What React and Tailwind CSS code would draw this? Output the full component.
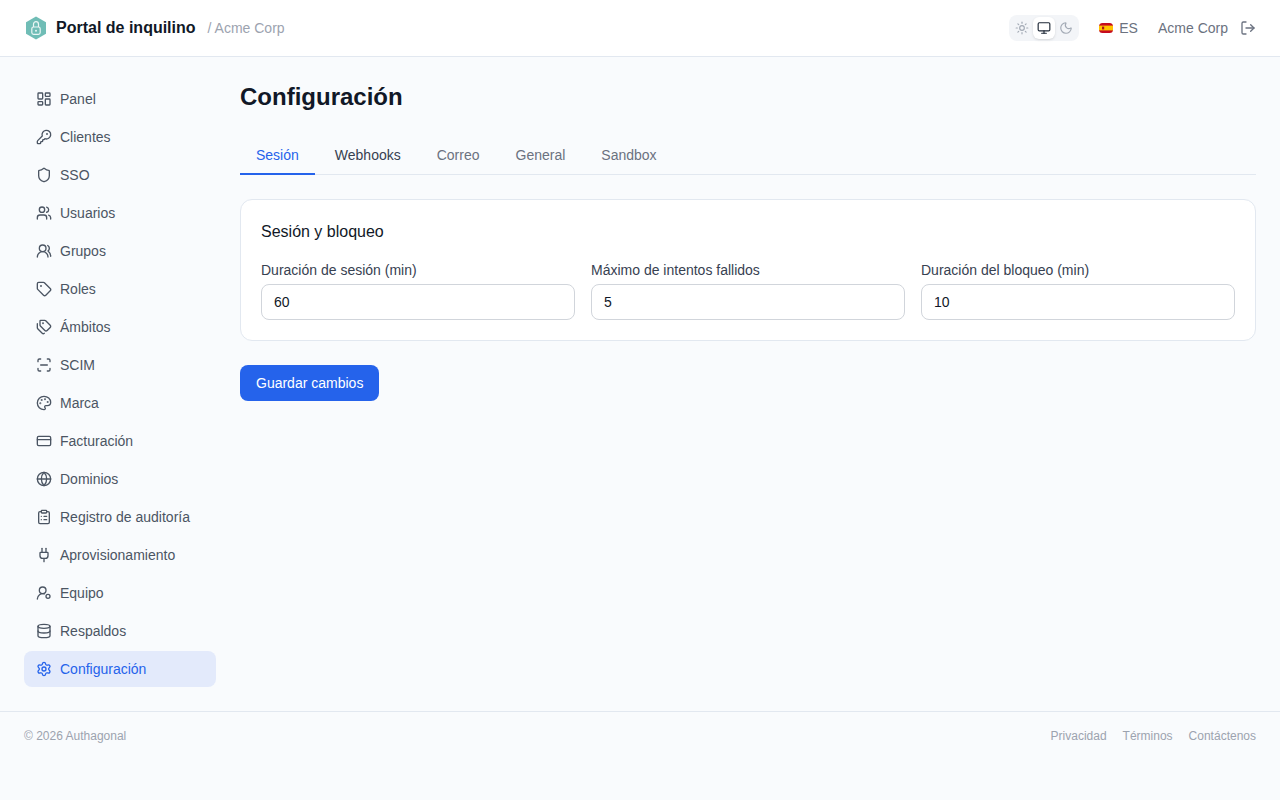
import React from "react";
import {
  LayoutDashboard, KeyRound, Shield, Users, UsersRound, Tag, Tags, ScanLine, Palette, CreditCard, Globe,
  ClipboardList, Plug, Database, Settings, Sun, Monitor, Moon, LogOut,
} from "lucide-react";

const UserDot = ({ size, strokeWidth, className }) => (
  <svg width={size} height={size} viewBox="0 0 24 24" fill="none" stroke="currentColor" strokeWidth={strokeWidth} strokeLinecap="round" className={className}>
    <circle cx="10" cy="8" r="5" />
    <path d="M2 21a8 8 0 0 1 10.4-7.6" />
    <circle cx="18" cy="17" r="3" />
  </svg>
);

const navItems = [
  { label: "Panel", icon: LayoutDashboard },
  { label: "Clientes", icon: KeyRound },
  { label: "SSO", icon: Shield },
  { label: "Usuarios", icon: Users },
  { label: "Grupos", icon: UsersRound },
  { label: "Roles", icon: Tag },
  { label: "Ámbitos", icon: Tags },
  { label: "SCIM", icon: ScanLine },
  { label: "Marca", icon: Palette },
  { label: "Facturación", icon: CreditCard },
  { label: "Dominios", icon: Globe },
  { label: "Registro de auditoría", icon: ClipboardList },
  { label: "Aprovisionamiento", icon: Plug },
  { label: "Equipo", icon: UserDot },
  { label: "Respaldos", icon: Database },
  { label: "Configuración", icon: Settings, active: true },
];

const tabs = ["Sesión", "Webhooks", "Correo", "General", "Sandbox"];

const fields = [
  { label: "Duración de sesión (min)", value: "60" },
  { label: "Máximo de intentos fallidos", value: "5" },
  { label: "Duración del bloqueo (min)", value: "10" },
];

const Logo = () => (
  <svg width="24" height="24" viewBox="0 0 24 24" fill="none">
    <path d="M12 0.6 22 6.3v11.4L12 23.4 2 17.7V6.3Z" fill="#70bdb6" />
    <rect x="7.8" y="11" width="8.4" height="7.4" rx="1.8" stroke="#eaf6f5" strokeWidth="1.2" />
    <path d="M9.5 11V8.2a2.5 2.5 0 0 1 5 0V11" stroke="#eaf6f5" strokeWidth="1.2" />
    <circle cx="12" cy="14.7" r="1" fill="#eaf6f5" />
  </svg>
);

const Flag = () => (
  <svg width="14" height="14" viewBox="0 0 14 14">
    <rect x="0" y="2" width="14" height="10" rx="3.5" fill="#c60b1e" />
    <rect x="0" y="4.6" width="14" height="4.8" fill="#ffc400" />
    <rect x="3" y="5.6" width="2.2" height="2.8" fill="#ad1519" />
  </svg>
);

export default function App() {
  return (
    <div className="min-h-[800px] bg-[#f9fbfd] font-['Liberation_Sans',Arial,sans-serif] flex flex-col">
      <header className="h-[57px] bg-white border-b border-[#e2e8f0] flex items-center justify-between px-6">
        <div className="flex items-center">
          <Logo />
          <span className="ml-2 text-base font-bold text-[#111827]">Portal de inquilino</span>
          <span className="ml-3 text-sm text-[#9ca3af]">/ Acme Corp</span>
        </div>
        <div className="flex items-center">
          <div className="flex items-center h-[26px] rounded-lg bg-[#f3f5f8] px-[2px]">
            <span className="w-[22px] h-[22px] flex items-center justify-center text-[#a3aab5]"><Sun size={14} /></span>
            <span className="w-[22px] h-[22px] flex items-center justify-center rounded-md bg-white text-[#1f2937] shadow-sm"><Monitor size={14} /></span>
            <span className="w-[22px] h-[22px] flex items-center justify-center text-[#a3aab5]"><Moon size={14} /></span>
          </div>
          <div className="ml-5 flex items-center gap-[6px] text-sm text-[#6b7280]">
            <Flag />
            <span>ES</span>
          </div>
          <span className="ml-5 text-sm text-[#6b7280]">Acme Corp</span>
          <LogOut size={16} className="ml-3 text-[#6b7280]" />
        </div>
      </header>

      <div className="flex h-[654px]">
        <nav className="w-[240px] shrink-0 px-6 pt-6 flex flex-col gap-[2px]">
          {navItems.map((item) => (
            <a
              key={item.label}
              className={`h-9 rounded-lg px-3 flex items-center gap-2 text-sm ${
                item.active ? "bg-[#e3eafb] text-[#2563eb]" : "text-[#4b5563]"
              }`}
            >
              <item.icon size={16} strokeWidth={2} className="shrink-0" />
              <span>{item.label}</span>
            </a>
          ))}
        </nav>

        <main className="flex-1 pr-6 pt-6">
          <h1 className="text-2xl font-bold text-[#111827] leading-8">Configuración</h1>
          <div className="mt-6 flex gap-1 border-b border-[#e2e8f0] h-[38px]">
            {tabs.map((tab, i) => (
              <button
                key={tab}
                className={`px-4 h-[38px] text-sm border-b-2 ${
                  i === 0
                    ? "text-[#2563eb] border-[#2563eb]"
                    : i === 1
                    ? "text-[#374151] border-transparent"
                    : "text-[#6b7280] border-transparent"
                }`}
              >
                {tab}
              </button>
            ))}
          </div>

          <section className="mt-6 bg-white border border-[#e2e8f0] rounded-xl p-5">
            <h2 className="text-base text-[#111827] leading-6">Sesión y bloqueo</h2>
            <div className="mt-4 grid grid-cols-3 gap-4">
              {fields.map((f) => (
                <label key={f.label} className="block">
                  <span className="block text-sm text-[#374151] leading-5 mb-1">{f.label}</span>
                  <input
                    readOnly
                    value={f.value}
                    className="w-full h-9 rounded-lg border border-[#d1d5db] bg-white px-3 text-sm text-[#111827] outline-none"
                  />
                </label>
              ))}
            </div>
          </section>

          <button className="mt-6 h-9 px-4 rounded-lg bg-[#2563eb] text-white text-sm">Guardar cambios</button>
        </main>
      </div>

      <footer className="border-t border-[#e2e8f0] h-[89px] px-6 pt-4 flex justify-between text-xs text-[#9ca3af]">
        <span>© 2026 Authagonal</span>
        <div className="flex gap-4">
          <span>Privacidad</span>
          <span>Términos</span>
          <span>Contáctenos</span>
        </div>
      </footer>
    </div>
  );
}
